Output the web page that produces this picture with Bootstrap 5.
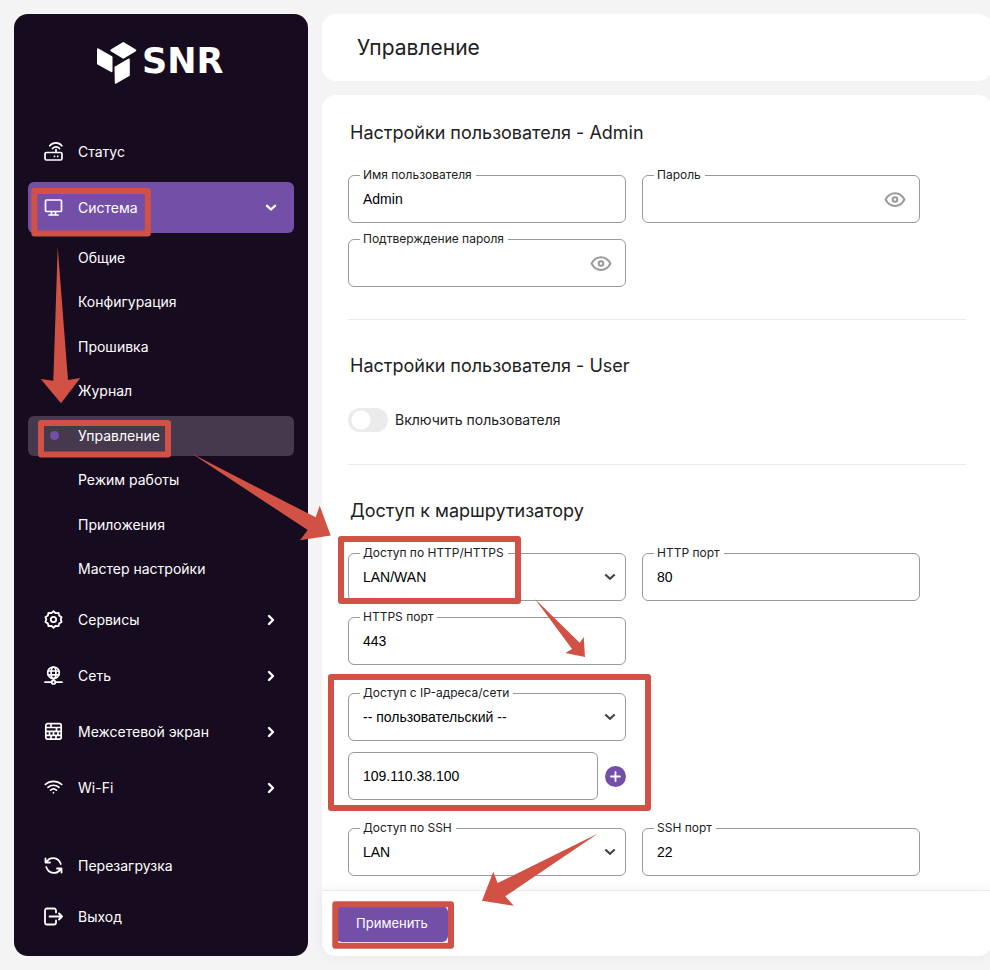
<!DOCTYPE html>
<html lang="ru">
<head>
<meta charset="utf-8">
<meta name="viewport" content="width=device-width, initial-scale=1">
<title>SNR – Управление</title>
<link href="https://cdn.jsdelivr.net/npm/bootstrap@5.3.0/dist/css/bootstrap.min.css" rel="stylesheet">
<style>
  :root { --violet: #734fa8; --ink: #170b1f; --line: #999; --rule: #ebebeb; }
  body { background: #f4f4f4; font: 14px/20px Inter, "Liberation Sans", sans-serif; color: #212121; overflow-x: hidden; }
  .shell { min-height: 100vh; padding: 14px 0 14px 14px; gap: 14px; }
  .sidebar { width: 294px; background: var(--ink); border-radius: 14px; padding: 14px; }
  .brand { height: 98px; padding-top: 12px; }
  .menu { gap: 5px; }
  .menu-link { height: 51px; padding: 0 16px; gap: 15px; border-radius: 6px; color: #fff; text-decoration: none; }
  .menu-link.current { background: var(--violet); }
  .menu-link svg, .eye svg, .add svg { fill: none; stroke: currentColor; stroke-linecap: round; stroke-linejoin: round; flex: none; }
  .submenu { height: 356px; padding-top: 5px; }
  .submenu a { height: 40px; padding: 0 22px; gap: 19px; border-radius: 6px; color: #fff; text-decoration: none; }
  .submenu a.current { background: #46394e; }
  .submenu a::before { content: ""; width: 9px; height: 9px; border-radius: 50%; }
  .submenu a.current::before { background: var(--violet); }
  .content { gap: 14px; margin-right: -2px; }
  .panel { background: #fff; border-radius: 14px; }
  .title-bar { height: 67px; padding: 0 35px; }
  .title-bar h1 { font-size: 21px; line-height: 24px; font-weight: 400; }
  .form-body { padding: 26px 26px 14px; }
  h2 { font-size: 18px; line-height: 24px; font-weight: 400; margin: 0 0 30px; padding-left: 2px; }
  .rule { margin: 32px 0 34px; border-color: var(--rule); opacity: 1; }
  .fields { display: grid; grid-template-columns: repeat(2, minmax(0, 278px)); gap: 16px; }
  .fields + .fields { margin-top: 28px; }
  .field > label { position: absolute; top: -9px; left: 12px; padding: 0 4px 0 3px; background: #fff; font-size: 12px; line-height: 18px; white-space: nowrap; }
  .field .form-control, .field .form-select { height: 48px; padding: 0 14px; border: 1px solid var(--line); border-radius: 6px; font: 14px/20px "Liberation Sans", Arial, sans-serif; color: #000; }
  .field .form-select { background: #fff; }
  .field .chev { position: absolute; right: 10px; top: 20px; pointer-events: none; fill: none; stroke: #444; }
  .eye { position: absolute; right: 14px; top: 13px; color: #999; line-height: 0; }
  .address { margin-top: 11px; gap: 7px; }
  .add { width: 21px; height: 21px; border-radius: 50%; background: var(--violet); color: #fff; flex: none; }
  .switch-row { min-height: 24px; gap: 7px; padding: 0; margin: 0; }
  .switch-row .form-check-input { width: 40px; height: 24px; margin: 0; float: none; border: 0; background: radial-gradient(circle at 13px 12px, #fff 9px, #ebebeb 10px); border-radius: 12px; }
  .actions { border-top: 1px solid var(--rule); padding: 15px 14px 14px; box-shadow: 0 0 14px rgba(0,0,0,.06); border-radius: 0 0 14px 14px; background: #fff; }
  .apply { width: 112px; height: 36px; padding: 0; background: var(--violet); color: #fff; border: 0; border-radius: 6px; font-size: 13px; }
  .marks { position: absolute; left: 0; top: 0; pointer-events: none; z-index: 5; }
</style>
</head>
<body>
<div class="shell d-flex position-relative">
  <aside class="sidebar d-flex flex-column flex-shrink-0">
    <div class="brand d-flex justify-content-center align-items-start">
      <svg width="132" height="46" viewBox="95 40 132 46" role="img" aria-label="SNR">
        <g fill="#fff" stroke="#fff" stroke-width="2" stroke-linejoin="round">
          <path d="M123.300 43l12 7.300-12 7.400-12-7.400z"/><path d="M98 49.300l13.500 7.900v14L98 63.700z"/><path d="M115.500 67.300l13.300-7.800v15.700L115.800 82.700z"/>
        </g>
        <text x="142" y="73" fill="#fff" font-family="DejaVu Sans" font-weight="700" font-size="35">SNR</text>
      </svg>
    </div>
    <nav class="menu d-flex flex-column">
      <a class="menu-link d-flex align-items-center" href="#">
        <svg width="19" height="19" viewBox="0 0 19 19" stroke-width="1.700"><rect x="1" y="10.500" width="17" height="7.500" rx="1.500"/><path d="M12 10v-2.500M10.500 14.300v.1M13.700 14.300v.1M5.800 3.800c3-3.800 9-3.800 12 0M8.500 6.500c2-2.200 5-2.200 7 0"/></svg>
        <span>Статус</span>
      </a>
      <div>
        <a class="menu-link current d-flex align-items-center" href="#" aria-expanded="true">
          <svg width="19" height="19" viewBox="0 0 19 19" stroke-width="1.700"><rect x="1.500" y="2" width="16" height="11.500" rx="1"/><path d="M7.500 13.500v3.300M11.500 13.500v3.300M5 17h9"/></svg>
          <span class="flex-grow-1">Система</span>
          <svg width="14" height="14" viewBox="0 0 14 14" stroke-width="2.300"><path d="M3 4.800l4 3.700 4-3.700"/></svg>
        </a>
        <div class="submenu d-flex flex-column justify-content-between">
          <a class="d-flex align-items-center" href="#">Общие</a>
          <a class="d-flex align-items-center" href="#">Конфигурация</a>
          <a class="d-flex align-items-center" href="#">Прошивка</a>
          <a class="d-flex align-items-center" href="#">Журнал</a>
          <a class="d-flex align-items-center current" href="#" aria-current="page">Управление</a>
          <a class="d-flex align-items-center" href="#">Режим работы</a>
          <a class="d-flex align-items-center" href="#">Приложения</a>
          <a class="d-flex align-items-center" href="#">Мастер настройки</a>
        </div>
      </div>
      <a class="menu-link d-flex align-items-center" href="#">
        <svg width="19" height="19" viewBox="0 0 19 19" stroke-width="1.800"><circle cx="9.500" cy="9.500" r="2.700"/><path d="M9.500 1.300l2.200 1.900 2.900-.3.500 2.700 2.500 1.600-.9 2.300.9 2.400-2.500 1.600-.5 2.600-2.900-.3-2.200 1.900-2.200-1.900-2.900.3-.5-2.600-2.500-1.600.9-2.400-.9-2.300 2.500-1.600.5-2.700 2.900.3z"/></svg>
        <span class="flex-grow-1">Сервисы</span>
        <svg width="14" height="14" viewBox="0 0 14 14" stroke-width="2.300"><path d="M5 3l4 4-4 4"/></svg>
      </a>
      <a class="menu-link d-flex align-items-center" href="#">
        <svg width="19" height="19" viewBox="0 0 19 19" stroke-width="1.700"><circle cx="9.500" cy="6.800" r="5.800"/><ellipse cx="9.500" cy="6.800" rx="2.400" ry="5.800"/><path d="M4 5h11M4 8.800h11M9.500 12.600v1.800M1 16.200h6.500M11.500 16.200H18"/><circle cx="9.500" cy="16.200" r="1.800"/></svg>
        <span class="flex-grow-1">Сеть</span>
        <svg width="14" height="14" viewBox="0 0 14 14" stroke-width="2.300"><path d="M5 3l4 4-4 4"/></svg>
      </a>
      <a class="menu-link d-flex align-items-center" href="#">
        <svg width="19" height="19" viewBox="0 0 19 19" stroke-width="1.700"><rect x="1.800" y="1.700" width="15.400" height="15.400" rx="1.800"/><path d="M2 5.500h15M2 9.400h15M2 13.300h15M7 2v3.500M12.500 5.500v3.900M5.500 9.400v3.900M9.500 9.400v3.900M14 9.400v3.900M7 13.300v3.800M12 13.300v3.800"/></svg>
        <span class="flex-grow-1">Межсетевой экран</span>
        <svg width="14" height="14" viewBox="0 0 14 14" stroke-width="2.300"><path d="M5 3l4 4-4 4"/></svg>
      </a>
      <a class="menu-link d-flex align-items-center" href="#">
        <svg width="19" height="19" viewBox="0 0 19 19" stroke-width="1.700"><path d="M1.300 6.500c4.500-4.300 11.900-4.300 16.400 0M4 9.400c3-2.900 8-2.900 11 0M6.600 12.200c1.700-1.500 4.100-1.500 5.800 0M9.500 14.700v.1"/></svg>
        <span class="flex-grow-1">Wi-Fi</span>
        <svg width="14" height="14" viewBox="0 0 14 14" stroke-width="2.300"><path d="M5 3l4 4-4 4"/></svg>
      </a>
    </nav>
    <nav class="mt-auto">
      <a class="menu-link d-flex align-items-center" href="#">
        <svg width="19" height="19" viewBox="0 0 19 19" stroke-width="1.800"><path d="M1.500 2.500v4h4.500M2.500 6C5.500.800 14 .300 16.800 8M17.500 16.500v-4h-4.500M16.500 13c-3 5.400-11.500 5.700-14.300-2"/></svg>
        <span>Перезагрузка</span>
      </a>
      <a class="menu-link d-flex align-items-center" href="#">
        <svg width="19" height="19" viewBox="0 0 19 19" stroke-width="1.800"><path d="M12 5.500V3.500a2 2 0 0 0-2-2H3a2 2 0 0 0-2 2v12a2 2 0 0 0 2 2h7a2 2 0 0 0 2-2V13.500M5.500 9.500H18M15 6.500l3 3-3 3"/></svg>
        <span>Выход</span>
      </a>
    </nav>
  </aside>

  <main class="content d-flex flex-column flex-grow-1">
    <header class="panel title-bar d-flex align-items-center"><h1 class="m-0">Управление</h1></header>
    <form class="panel d-flex flex-column flex-grow-1">
      <div class="form-body flex-grow-1">
        <h2>Настройки пользователя - Admin</h2>
        <div class="fields">
          <div class="field position-relative"><label for="user">Имя пользователя</label><input class="form-control" id="user" type="text" value="Admin"></div>
          <div class="field position-relative"><label for="pass">Пароль</label><input class="form-control" id="pass" type="password">
            <button class="eye btn p-0 border-0" type="button" aria-label="Показать пароль"><svg width="22" height="22" viewBox="0 0 22 22" stroke-width="2"><path d="M1.500 11.500C6 3 16 3 20.500 11.500 16 20 6 20 1.500 11.500z"/><circle cx="11" cy="11.500" r="2.300"/></svg></button></div>
          <div class="field position-relative"><label for="pass2">Подтверждение пароля</label><input class="form-control" id="pass2" type="password">
            <button class="eye btn p-0 border-0" type="button" aria-label="Показать пароль"><svg width="22" height="22" viewBox="0 0 22 22" stroke-width="2"><path d="M1.500 11.500C6 3 16 3 20.500 11.500 16 20 6 20 1.500 11.500z"/><circle cx="11" cy="11.500" r="2.300"/></svg></button></div>
        </div>
        <hr class="rule">
        <h2>Настройки пользователя - User</h2>
        <div class="switch-row form-check form-switch d-flex align-items-center">
          <input class="form-check-input" type="checkbox" role="switch" id="enable"><label for="enable">Включить пользователя</label>
        </div>
        <hr class="rule">
        <h2>Доступ к маршрутизатору</h2>
        <div class="fields">
          <div class="field position-relative"><label for="http">Доступ по HTTP/HTTPS</label><select class="form-select" id="http"><option>LAN/WAN</option></select><svg class="chev" width="12" height="9" viewBox="0 0 12 9" stroke-width="2.200"><path d="M1.300 1.500L6 5.800 10.700 1.500"/></svg></div>
          <div class="field position-relative"><label for="httpport">HTTP порт</label><input class="form-control" id="httpport" type="text" value="80"></div>
          <div class="field position-relative"><label for="httpsport">HTTPS порт</label><input class="form-control" id="httpsport" type="text" value="443"></div>
        </div>
        <div class="fields">
          <div>
            <div class="field position-relative"><label for="source">Доступ с IP-адреса/сети</label><select class="form-select" id="source"><option>-- пользовательский --</option></select><svg class="chev" width="12" height="9" viewBox="0 0 12 9" stroke-width="2.200"><path d="M1.300 1.500L6 5.800 10.700 1.500"/></svg></div>
            <div class="field address d-flex align-items-center">
              <input class="form-control" type="text" value="109.110.38.100" aria-label="IP-адрес">
              <button class="add btn border-0 p-0 d-flex align-items-center justify-content-center" type="button" aria-label="Добавить"><svg width="13" height="13" viewBox="0 0 13 13" stroke-width="1.800"><path d="M6.500 2v9M2 6.500h9"/></svg></button>
            </div>
          </div>
        </div>
        <div class="fields">
          <div class="field position-relative"><label for="ssh">Доступ по SSH</label><select class="form-select" id="ssh"><option>LAN</option></select><svg class="chev" width="12" height="9" viewBox="0 0 12 9" stroke-width="2.200"><path d="M1.300 1.500L6 5.800 10.700 1.500"/></svg></div>
          <div class="field position-relative"><label for="sshport">SSH порт</label><input class="form-control" id="sshport" type="text" value="22"></div>
        </div>
      </div>
      <div class="actions"><button class="apply btn d-block" type="button">Применить</button></div>
    </form>
  </main>

  <svg class="marks" width="660" height="960" viewBox="0 0 660 960" aria-hidden="true">
    <g fill="none" stroke="#d15145" stroke-width="6" stroke-linejoin="round">
      <rect x="34.300" y="191" width="113.500" height="42.500"/><rect x="41" y="423" width="127" height="31.500"/><rect x="341" y="539" width="177" height="62"/><rect x="331" y="677" width="317" height="131"/><rect x="335.300" y="904.200" width="115.700" height="41.500"/>
    </g>
    <g fill="#d15145">
      <path d="M57.700 247L68 380l12.300-2L61 403.300 40.700 379l12.600 1.700z"/>
      <path d="M192 453.800l123.700 63.500 4-11.600 11 29.700-30.700 4.900 7.700-10.300z"/>
      <path d="M535 599l44.700 43.700 4-5.700 1.300 20-19.700-4 6.700-4z"/>
      <path d="M598 833.600l-92.700 62.700 8.400 9.500-31.700-5.100 11.300-29 4.400 11.300z"/>
    </g>
  </svg>
</div>
<script src="https://cdn.jsdelivr.net/npm/bootstrap@5.3.0/dist/js/bootstrap.bundle.min.js"></script>
</body>
</html>
